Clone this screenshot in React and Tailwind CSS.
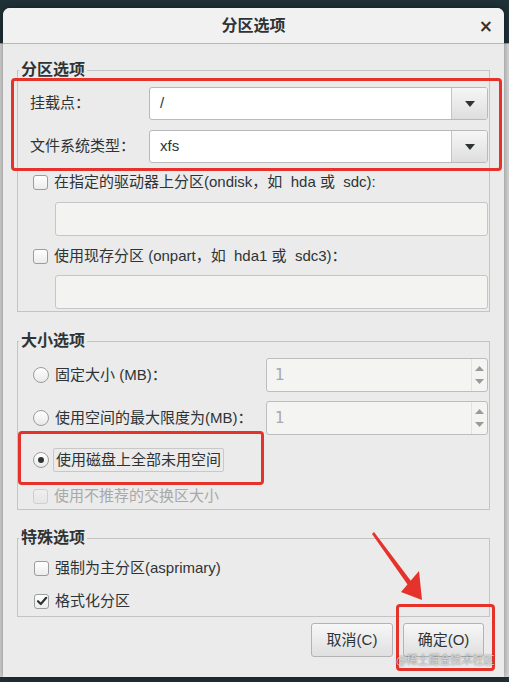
import React from 'react';

const font = { fontFamily: '"Liberation Sans", "Noto Sans CJK SC", "Noto Sans", sans-serif' };

const CheckBox = ({ checked, disabled }) => (
  <span
    className={`flex h-[15px] w-[15px] shrink-0 items-center justify-center rounded-[3px] border bg-gradient-to-b ${
      disabled ? 'border-[#cfcfcf] from-[#efefef] to-[#e6e6e6]' : 'border-[#9c9c9c] from-[#ffffff] to-[#ececec]'
    }`}
  >
    {checked && (
      <svg width="12" height="12" viewBox="0 0 12 12">
        <path d="M2 6.2 L4.8 9 L10.2 2.8" fill="none" stroke="#2e3436" strokeWidth="2.2" strokeLinecap="round" strokeLinejoin="round" />
      </svg>
    )}
  </span>
);

const Radio = ({ checked }) => (
  <span className="flex h-[16px] w-[16px] shrink-0 items-center justify-center rounded-full border border-[#9c9c9c] bg-gradient-to-b from-[#ffffff] to-[#e9e9e9]">
    {checked && <span className="h-[6px] w-[6px] rounded-full bg-[#2e3436]" />}
  </span>
);

const Combo = ({ value }) => (
  <div className="flex h-[33px] flex-1 overflow-hidden rounded-[3px] border border-[#b9b9b9] bg-white">
    <div className="flex flex-1 items-center pl-[10px] text-[15px] text-[#2e3436]">{value}</div>
    <div className="flex w-[36px] items-center justify-center border-l border-[#c4c4c4] bg-gradient-to-b from-[#f6f6f6] to-[#dedede]">
      <svg width="10" height="6" viewBox="0 0 10 6">
        <path d="M0 0 H10 L5 6 Z" fill="#2e3436" />
      </svg>
    </div>
  </div>
);

const Spin = ({ value }) => (
  <div className="flex h-[34px] w-[222px] overflow-hidden rounded-[3px] border border-[#bdbdbd] bg-[#f4f4f2]">
    <div className="flex flex-1 items-center pl-[8px] text-[15px] text-[#a8a8a8]" style={{ fontFamily: '"DejaVu Sans", sans-serif' }}>
      {value}
    </div>
    <div className="flex w-[16px] flex-col items-center justify-around border-l border-[#e2e2e2] py-[3px]">
      <svg width="9" height="5" viewBox="0 0 9 5">
        <path d="M0 5 H9 L4.5 0 Z" fill="#9a9a9a" />
      </svg>
      <svg width="9" height="5" viewBox="0 0 9 5">
        <path d="M0 0 H9 L4.5 5 Z" fill="#9a9a9a" />
      </svg>
    </div>
  </div>
);

const Frame = ({ title, className, children }) => (
  <fieldset className={`border border-[#c4c4c4] ${className}`}>
    <legend className="ml-[1px] px-[2px] text-[16px] font-bold leading-[20px] text-[#2e3436]">{title}</legend>
    {children}
  </fieldset>
);

export default function App() {
  return (
    <div className="relative h-[682px] w-[509px] overflow-hidden bg-[#1f3036]" style={font}>
      {/* window behind the dialog */}
      <div className="absolute left-0 top-[43px] h-[634px] w-[509px] border-t border-[#9a9a9a] bg-[#d4d4d4]" />

      {/* dialog */}
      <div className="absolute left-[3px] top-[8px] flex h-[669px] w-[501px] flex-col rounded-t-[7px] bg-[#ebebeb] shadow-[0_0_6px_rgba(0,0,0,0.4)]">
        <div className="relative flex h-[36px] shrink-0 items-center justify-center rounded-t-[7px] border-b border-[#b9b9b9] bg-[#f1f1f1]">
          <span className="text-[16px] font-bold text-[#2e3436]">分区选项</span>
          <span className="absolute right-[11px] top-[8px] text-[17px] font-bold leading-[20px] text-[#2e3436]" style={{ fontFamily: '"DejaVu Sans", sans-serif' }}>
            ×
          </span>
        </div>

        <div className="flex flex-1 flex-col px-[14px] pt-[16px] text-[15px] text-[#2e3436]">
          <Frame title="分区选项" className="pb-[2px] pr-[1px]">
            <div className="mt-[7px] flex items-center">
              <span className="w-[131px] shrink-0 pl-[12px]">挂载点：</span>
              <Combo value="/" />
            </div>
            <div className="mt-[10px] flex items-center">
              <span className="w-[131px] shrink-0 pl-[12px]">文件系统类型：</span>
              <Combo value="xfs" />
            </div>
            <div className="mt-[9px] flex h-[20px] items-center gap-[6px] pl-[15px]">
              <CheckBox />
              <span>在指定的驱动器上分区(ondisk，如&nbsp; hda 或&nbsp; sdc):</span>
            </div>
            <div className="ml-[37px] mt-[10px] h-[34px] rounded-[3px] border border-[#c6c6c6] bg-[#f3f3f1]" />
            <div className="mt-[10px] flex h-[20px] items-center gap-[6px] pl-[15px]">
              <CheckBox />
              <span>使用现存分区 (onpart，如&nbsp; hda1 或&nbsp; sdc3)：</span>
            </div>
            <div className="ml-[37px] mt-[9px] h-[34px] rounded-[3px] border border-[#c6c6c6] bg-[#f3f3f1]" />
          </Frame>

          <Frame title="大小选项" className="mt-[19px] pb-[3px] pr-[1px]">
            <div className="mt-[7px] flex h-[34px] items-center justify-between pl-[15px]">
              <div className="flex items-center gap-[6px]">
                <Radio />
                <span>固定大小 (MB)：</span>
              </div>
              <Spin value="1" />
            </div>
            <div className="mt-[9px] flex h-[34px] items-center justify-between pl-[15px]">
              <div className="flex items-center gap-[6px]">
                <Radio />
                <span>使用空间的最大限度为(MB)：</span>
              </div>
              <Spin value="1" />
            </div>
            <div className="mt-[13px] flex h-[24px] items-center gap-[4px] pl-[15px]">
              <Radio checked />
              <span className="flex h-[24px] items-center rounded-[2px] border border-[#c8c8c8] px-[2px]">使用磁盘上全部未用空间</span>
            </div>
            <div className="mt-[14px] flex h-[20px] items-center gap-[6px] pl-[15px] text-[#a9a9a9]">
              <CheckBox disabled />
              <span>使用不推荐的交换区大小</span>
            </div>
          </Frame>

          <Frame title="特殊选项" className="mt-[18px] pb-[5px]">
            <div className="mt-[10px] flex h-[20px] items-center gap-[6px] pl-[16px]">
              <CheckBox />
              <span>强制为主分区(asprimary)</span>
            </div>
            <div className="mt-[13px] flex h-[20px] items-center gap-[6px] pl-[16px]">
              <CheckBox checked />
              <span>格式化分区</span>
            </div>
          </Frame>

          <div className="mt-[6px] flex justify-end gap-[10px] pr-[6px]">
            <button className="flex h-[34px] w-[82px] items-center justify-center rounded-[3px] border border-[#b3b3b3] bg-gradient-to-b from-[#f7f7f7] to-[#dfdfdf] text-[15px] text-[#2e3436]">
              取消(C)
            </button>
            <button className="flex h-[34px] w-[81px] items-center justify-center rounded-[3px] border border-[#b3b3b3] bg-gradient-to-b from-[#f7f7f7] to-[#dfdfdf] text-[15px] text-[#2e3436]">
              确定(O)
            </button>
          </div>
        </div>
      </div>

      {/* annotations */}
      <div className="pointer-events-none absolute left-[11px] top-[78px] h-[93px] w-[491px] rounded-[4px] border-[3px] border-[#e5322b]" />
      <div className="pointer-events-none absolute left-[18px] top-[431px] h-[54px] w-[246px] rounded-[4px] border-[3px] border-[#e5322b]" />
      <div className="pointer-events-none absolute left-[396px] top-[604px] h-[67px] w-[99px] rounded-[4px] border-[3px] border-[#e5322b]" />
      <svg className="pointer-events-none absolute left-0 top-0" width="509" height="682" viewBox="0 0 509 682">
        <polygon points="372,534 374,532 414,585 410,588" fill="#e5322b" />
        <polygon points="401,592 419,571 422,600" fill="#e5322b" />
      </svg>
      <span className="pointer-events-none absolute left-[396px] top-[652px] text-[11px] leading-[14px] text-[#d8d8d8] [text-shadow:0_0_2px_rgba(0,0,0,0.6)]" style={{ fontFamily: '"Noto Sans CJK SC", sans-serif' }}>
        @稀土掘金技术社区
      </span>
    </div>
  );
}
